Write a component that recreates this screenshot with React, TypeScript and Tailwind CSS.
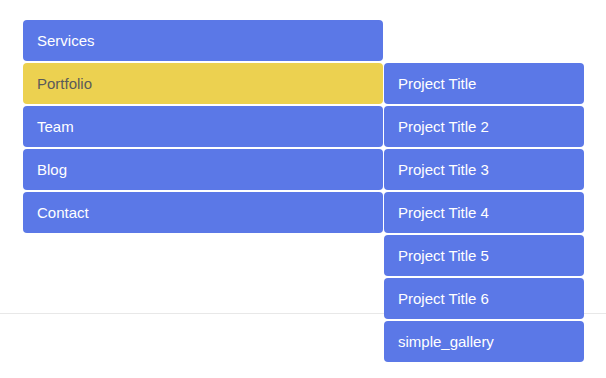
const projects = [
  "Project Title",
  "Project Title 2",
  "Project Title 3",
  "Project Title 4",
  "Project Title 5",
  "Project Title 6",
  "simple_gallery",
];

const menu = ["Services", "Portfolio", "Team", "Blog", "Contact"];

export default function App() {
  return (
    <div className="min-h-screen bg-white font-['Liberation_Sans',Arial,sans-serif] text-[15px]">
      <header className="h-[314px] border-b border-[#e8e8e8]">
        <nav className="pt-5 pl-[23px]">
          <ul className="flex w-[361px] flex-col gap-[2px]">
            {menu.map((item) => {
              const active = item === "Portfolio";
              return (
                <li key={item} className="relative">
                  <a
                    className={
                      active
                        ? "flex h-[41px] w-[360px] items-center rounded bg-[#ecd150] px-[14px] pt-[2px] text-[#5a5a5a]"
                        : "flex h-[41px] w-[360px] items-center rounded bg-[#5b78e7] px-[14px] pt-[2px] text-white"
                    }
                  >
                    {item}
                  </a>
                  {active && (
                    <ul className="absolute left-[361px] top-0 z-10 flex w-[200px] flex-col gap-[2px]">
                      {projects.map((p) => (
                        <li key={p}>
                          <a className="flex h-[41px] items-center rounded bg-[#5b78e7] px-[14px] pt-[2px] text-white">
                            {p}
                          </a>
                        </li>
                      ))}
                    </ul>
                  )}
                </li>
              );
            })}
          </ul>
        </nav>
      </header>
    </div>
  );
}
